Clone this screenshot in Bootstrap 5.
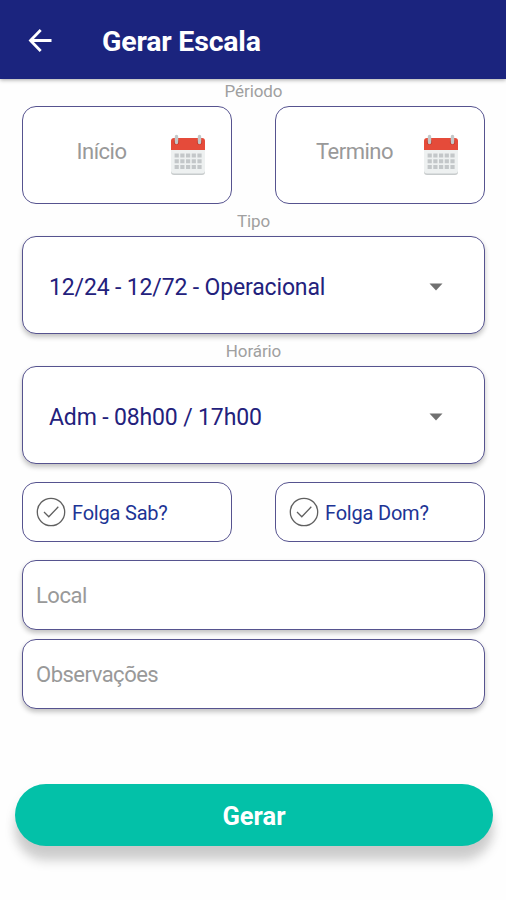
<!DOCTYPE html>
<html lang="pt-BR">
<head>
<meta charset="utf-8">
<meta name="viewport" content="width=device-width, initial-scale=1">
<title>Gerar Escala</title>
<link href="https://cdn.jsdelivr.net/npm/bootstrap@5.3.0/dist/css/bootstrap.min.css" rel="stylesheet">
<style>
  body { font-family: Roboto, sans-serif; min-height: 900px; background: #fefefe; overflow: hidden; }
  .app-bar { height: 79px; background: #1b247e; padding: 2px 0 0 22px; box-shadow: 0 1px 4px rgba(0,0,0,.35); }
  .app-title { font-size: 28.5px; letter-spacing: -.2px; line-height: 32px; margin-left: 44px; padding-top: 2px; }
  .back-btn { width: 36px; height: 36px; }
  .form-area { padding: 0 21px 0 22px; }
  .caption { color: #a0a0a0; font-size: 17px; letter-spacing: -.1px; line-height: 20px; height: 32px; padding-top: 7px; }
  .caption-first { height: 27px; padding-top: 2px; }
  .field { border: 1px solid #56538f; border-radius: 14px; background: #fff; }
  .raised { box-shadow: 0 3px 5px rgba(0,0,0,.24); }
  .pair { gap: 43px; }
  .date-field, .select-field { height: 98px; }
  .hint { color: #999; font-size: 22px; letter-spacing: -.5px; line-height: 28px; }
  .date-field .hint { width: 109px; margin-left: 24px; margin-top: -7px; }
  .select-field { padding: 0 41px 0 26px; color: #23217c; font-size: 23px; letter-spacing: -.15px; }
  .select-field span { padding-top: 6px; }
  .select-field svg { margin-top: 4px; }
  .check-field { height: 60px; margin-top: 18px; padding-left: 13px; gap: 6px; color: #1d3495; font-size: 20px; letter-spacing: -.2px; }
  .check-field span { padding-top: 2px; }
  .text-field { height: 70px; padding-left: 13px; }
  .text-field .hint { padding-top: 2px; }
  .field-local { margin-top: 18px; }
  .field-notes { margin-top: 9px; }
  .submit-btn, .submit-btn:hover { height: 62px; margin: 75px 13px 0 15px; background: #03c1a8; color: #fff; font-size: 25.500px; padding-top: 8px; box-shadow: 0 15px 11px rgba(0,0,0,.17), 0 6px 14px rgba(0,0,0,.06); }
</style>
<script src="https://cdn.jsdelivr.net/npm/bootstrap@5.3.0/dist/js/bootstrap.bundle.min.js"></script>
</head>
<body>
<svg class="d-none" aria-hidden="true">
  <symbol id="calendar" viewBox="0 0 36 42">
    <path d="M1 15h34v23a3 3 0 0 1-3 3H4a3 3 0 0 1-3-3z" fill="#c7cbcc"/>
    <path d="M1 14h34v22.500a3 3 0 0 1-3 3H4a3 3 0 0 1-3-3z" fill="#eef1f1"/>
    <path d="M1 16V7a3 3 0 0 1 3-3h28a3 3 0 0 1 3 3v9z" fill="#e54b3a"/>
    <path d="M4.600 21.500h27M4.600 27.300h27M4.600 33.100h27" stroke="#c3c7c9" stroke-width="4" stroke-dasharray="4.200 1.500"/>
    <circle cx="6.500" cy="8" r="2.600" fill="#bd3a2d"/><circle cx="29.500" cy="8" r="2.600" fill="#bd3a2d"/>
    <path d="M6.500 2.500v6M29.500 2.500v6" stroke="#c3c7c8" stroke-width="3.400" stroke-linecap="round"/>
  </symbol>
  <symbol id="check" viewBox="0 0 30 30">
    <g fill="none" stroke="#606060" stroke-width="1.300"><circle cx="15" cy="15" r="13.700"/><path d="M8 15l4.800 4.800L22.300 9.800"/></g>
  </symbol>
  <symbol id="caret" viewBox="0 0 14 8"><path d="M.5.500h13L7 7.500z" fill="#707070"/></symbol>
</svg>

<header class="app-bar d-flex align-items-center">
  <button class="back-btn btn p-0 border-0 d-flex" aria-label="Voltar">
    <svg width="36" height="36" viewBox="0 0 36 36" fill="none" stroke="#fff" stroke-width="2.800"><path d="M29.500 17.500H8.800M18.700 7L8.500 17.500l10.200 10.500"/></svg>
  </button>
  <h1 class="app-title text-white fw-bold mb-0">Gerar Escala</h1>
</header>

<main>
  <div class="form-area">
    <div class="caption caption-first text-center">Périodo</div>
    <div class="pair d-flex">
      <div class="field date-field d-flex align-items-center flex-fill w-50">
        <span class="hint text-center">Início</span>
        <svg class="ms-auto me-4" width="38" height="42"><use href="#calendar"/></svg>
      </div>
      <div class="field date-field d-flex align-items-center flex-fill w-50">
        <span class="hint text-center">Termino</span>
        <svg class="ms-auto me-4" width="38" height="42"><use href="#calendar"/></svg>
      </div>
    </div>
    <div class="caption text-center">Tipo</div>
    <div class="field raised select-field d-flex align-items-center justify-content-between">
      <span>12/24 - 12/72 - Operacional</span>
      <svg width="14" height="8"><use href="#caret"/></svg>
    </div>
    <div class="caption text-center">Horário</div>
    <div class="field raised select-field d-flex align-items-center justify-content-between">
      <span>Adm - 08h00 / 17h00</span>
      <svg width="14" height="8"><use href="#caret"/></svg>
    </div>
    <div class="pair d-flex">
      <div class="field check-field d-flex align-items-center flex-fill w-50">
        <svg width="30" height="30"><use href="#check"/></svg><span>Folga Sab?</span>
      </div>
      <div class="field check-field d-flex align-items-center flex-fill w-50">
        <svg width="30" height="30"><use href="#check"/></svg><span>Folga Dom?</span>
      </div>
    </div>
    <div class="field raised text-field field-local d-flex align-items-center"><span class="hint">Local</span></div>
    <div class="field raised text-field field-notes d-flex align-items-center"><span class="hint">Observações</span></div>
  </div>
  <div class="d-grid">
    <button class="submit-btn btn border-0 rounded-pill fw-bold">Gerar</button>
  </div>
</main>
</body>
</html>
